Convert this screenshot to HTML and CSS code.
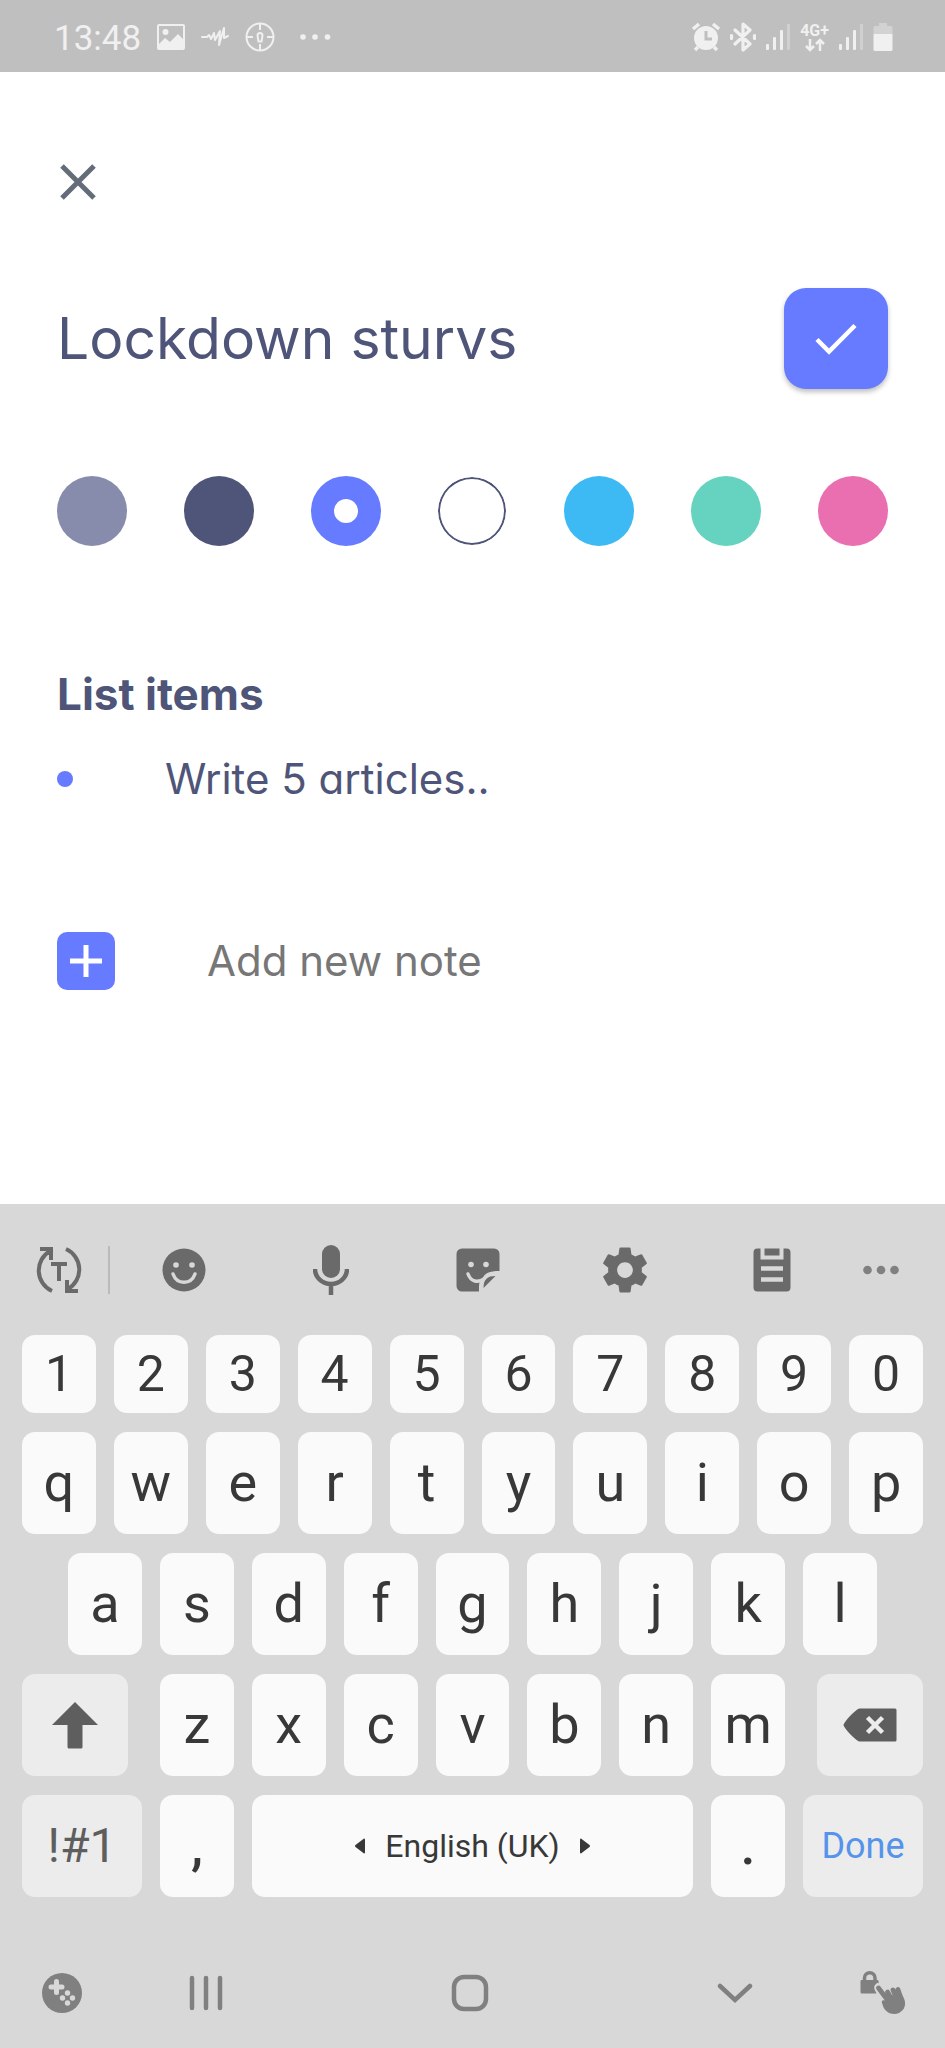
FILE: index.html
```html
<!DOCTYPE html>
<html lang="en">
<head>
<meta charset="utf-8">
<meta name="viewport" content="width=device-width, initial-scale=1">
<title>Lockdown sturvs</title>
<link rel="stylesheet" href="styles.css">
</head>
<body>
<div class="screen">
  <header class="status">
    <div class="status-left">
      <time class="clock">13:48</time>
      <svg width="28" height="28" viewBox="0 0 28 28" fill="currentColor" aria-hidden="true"><path fill-rule="evenodd" d="M2 1h24a2 2 0 0 1 2 2v22a2 2 0 0 1-2 2H2a2 2 0 0 1-2-2V3a2 2 0 0 1 2-2zm0 2v18l6-6 5 4 8-8 5 5V3zM8.500 6a3 3 0 1 1 0 6 3 3 0 0 1 0-6z"/></svg>
      <svg class="pulse" width="28" height="20" viewBox="0 0 28 20" fill="none" stroke="currentColor" stroke-width="2" stroke-linejoin="round" stroke-linecap="round" aria-hidden="true"><path d="M1 10h5l2-2 2 4 3-6 1 7 5-9-1 14 5-17v10l4-2"/></svg>
      <svg class="target" width="30" height="30" viewBox="0 0 30 30" fill="none" stroke="currentColor" stroke-width="2" aria-hidden="true"><circle cx="15" cy="15" r="13.500"/><path d="M15 2v6M15 22v6M2 15h6M22 15h6M13.500 19.500l-1-6a2.500 2.500 0 1 1 5 0l-1 6z" /></svg>
      <svg class="more" width="32" height="8" viewBox="0 0 32 8" fill="currentColor" aria-hidden="true"><circle cx="4" cy="4" r="2.800"/><circle cx="16" cy="4" r="2.800"/><circle cx="28.500" cy="4" r="2.800"/></svg>
    </div>
    <div class="status-right">
      <svg width="30" height="30" viewBox="0 0 30 30" aria-hidden="true"><circle cx="15" cy="16" r="12" fill="currentColor"/><path d="M2 7l6-5M28 7l-6-5M7 25l-3 3M23 25l3 3" stroke="currentColor" stroke-width="3.500"/><path d="M15 9v8h6" stroke="#bfbfbf" stroke-width="3" fill="none"/></svg>
      <svg width="26" height="30" viewBox="0 0 26 30" fill="none" stroke="currentColor" stroke-width="3.200" stroke-linejoin="round" stroke-linecap="round" aria-hidden="true"><path d="M5 8l15 14-7 6V2l7 6L5 22M1.500 13.500v3M24.500 13.500v3"/></svg>
      <svg width="26" height="28" viewBox="0 0 26 28" fill="currentColor" aria-hidden="true"><rect x="1" y="21" width="3" height="6" rx="1"/><rect x="8" y="14" width="3" height="13" rx="1"/><rect x="15" y="7" width="3" height="20" rx="1"/><rect x="22" y="1" width="3" height="26" rx="1" opacity=".35"/></svg>
      <span class="net"><span>4G+</span><svg width="20" height="14" viewBox="0 0 20 14" fill="none" stroke="currentColor" stroke-width="2.500" aria-hidden="true"><path d="M5 1v11M1 8l4 4 4-4M15 13V2M11 6l4-4 4 4"/></svg></span>
      <svg width="26" height="28" viewBox="0 0 26 28" fill="currentColor" aria-hidden="true"><rect x="1" y="21" width="3" height="6" rx="1"/><rect x="8" y="14" width="3" height="13" rx="1"/><rect x="15" y="7" width="3" height="20" rx="1"/><rect x="22" y="1" width="3" height="26" rx="1" opacity=".35"/></svg>
      <svg width="20" height="28" viewBox="0 0 20 28" fill="currentColor" aria-hidden="true"><path d="M6 0h8v3h4a1.500 1.500 0 0 1 1.500 1.500V11H.5V4.500A1.500 1.500 0 0 1 2 3h4z" opacity=".4"/><path d="M.5 11h19v15.500A1.500 1.500 0 0 1 18 28H2a1.500 1.500 0 0 1-1.500-1.500z"/></svg>
    </div>
  </header>

  <main class="note">
    <button class="close" type="button" aria-label="Close"><svg width="36" height="36" viewBox="0 0 36 36" fill="none" stroke="currentColor" stroke-width="5" aria-hidden="true"><path d="M2 2l32 32M34 2L2 34"/></svg></button>
    <div class="title-row">
      <input class="title" type="text" value="Lockdown sturvs" aria-label="Title">
      <button class="save" type="button" aria-label="Save"><svg width="42" height="34" viewBox="0 0 42 34" fill="none" stroke="currentColor" stroke-width="4.500" aria-hidden="true"><path d="M2 17.500l12 12L40 3.500"/></svg></button>
    </div>
    <div class="swatches" role="radiogroup" aria-label="Colour">
      <input class="swatch grey" type="radio" name="colour" aria-label="Grey">
      <input class="swatch navy" type="radio" name="colour" aria-label="Navy">
      <input class="swatch indigo" type="radio" name="colour" aria-label="Indigo" checked>
      <input class="swatch white" type="radio" name="colour" aria-label="White">
      <input class="swatch sky" type="radio" name="colour" aria-label="Sky">
      <input class="swatch mint" type="radio" name="colour" aria-label="Mint">
      <input class="swatch pink" type="radio" name="colour" aria-label="Pink">
    </div>
    <h2 class="heading">List items</h2>
    <ul class="items"><li>Write 5 articles..</li></ul>
    <div class="add-row">
      <button class="add" type="button" aria-label="Add"><svg width="34" height="34" viewBox="0 0 34 34" fill="none" stroke="currentColor" stroke-width="5" aria-hidden="true"><path d="M17 1v32M1 17h32"/></svg></button>
      <input class="new-note" type="text" placeholder="Add new note" aria-label="Add new note">
    </div>
  </main>

  <section class="keyboard" aria-label="Keyboard">
    <div class="tools">
      <button class="tool first" type="button" aria-label="Text mode"><svg width="48" height="48" viewBox="0 0 48 48" fill="none" stroke="currentColor" stroke-width="4" aria-hidden="true"><path d="M17 45A22.500 22.500 0 0 1 15 5M31 3A22.500 22.500 0 0 1 33 43M5 3h11v11M43 45H32V34M16 18h16M24 18v17"/></svg></button>
      <button class="tool" type="button" aria-label="Emoji"><svg width="44" height="44" viewBox="0 0 44 44" aria-hidden="true"><circle cx="22" cy="22" r="21.500" fill="currentColor"/><circle cx="14" cy="17" r="2.800" fill="#d8d8d8"/><circle cx="30" cy="17" r="2.800" fill="#d8d8d8"/><path d="M11 26c4 11 18 11 22 0" fill="none" stroke="#d8d8d8" stroke-width="3.500" stroke-linecap="round"/></svg></button>
      <button class="tool" type="button" aria-label="Voice"><svg width="36" height="50" viewBox="0 0 36 50" aria-hidden="true"><rect x="9" y="0" width="18" height="33" rx="9" fill="currentColor"/><path d="M2 24a16 15 0 0 0 32 0M18 39v11" fill="none" stroke="currentColor" stroke-width="4.500"/></svg></button>
      <button class="tool" type="button" aria-label="Stickers"><svg width="44" height="44" viewBox="0 0 44 44" aria-hidden="true"><path d="M6 .5h32a5.500 5.500 0 0 1 5.500 5.500v17C33 23 29 25 26 31c-3 2-3 5-3 12.500H6A5.500 5.500 0 0 1 .5 38V6A5.500 5.500 0 0 1 6 .5z" fill="currentColor"/><path d="M27.500 40c0-9 4-12 12-12z" fill="currentColor"/><circle cx="15" cy="16.500" r="2.800" fill="#d8d8d8"/><circle cx="30" cy="16.500" r="2.800" fill="#d8d8d8"/><path d="M12 26c3 8 10 9 16 5" fill="none" stroke="#d8d8d8" stroke-width="3.500" stroke-linecap="round"/></svg></button>
      <button class="tool" type="button" aria-label="Settings"><svg width="54" height="54" viewBox="0 0 24 24" fill="currentColor" aria-hidden="true"><path d="M19.430 12.980c.040-.320.070-.640.070-.980s-.030-.660-.070-.980l2.110-1.650c.190-.150.240-.420.120-.640l-2-3.460c-.120-.220-.390-.300-.610-.220l-2.490 1c-.520-.400-1.080-.730-1.690-.980l-.380-2.650C14.460 2.180 14.250 2 14 2h-4c-.250 0-.460.180-.490.420l-.380 2.650c-.610.250-1.170.590-1.690.980l-2.490-1c-.230-.090-.490 0-.610.220l-2 3.460c-.130.220-.070.490.120.640l2.110 1.650c-.040.320-.070.650-.070.980s.030.660.070.980l-2.110 1.650c-.190.150-.240.420-.120.640l2 3.460c.120.220.390.300.610.220l2.490-1c.520.400 1.080.730 1.690.980l.380 2.650c.030.240.240.420.490.420h4c.250 0 .460-.180.490-.420l.380-2.650c.610-.250 1.170-.590 1.690-.980l2.490 1c.230.090.490 0 .610-.220l2-3.460c.120-.220.070-.490-.120-.640l-2.110-1.650zM12 15.500c-1.930 0-3.500-1.570-3.500-3.500s1.570-3.500 3.500-3.500 3.500 1.570 3.500 3.500-1.570 3.500-3.500 3.500z"/></svg></button>
      <button class="tool" type="button" aria-label="Clipboard"><svg width="38" height="44" viewBox="0 0 38 44" aria-hidden="true"><rect x=".5" y=".5" width="37" height="43" rx="4" fill="currentColor"/><path d="M9.500 0v9.500h19V0" fill="none" stroke="#d8d8d8" stroke-width="4"/><path d="M8 20.500h22M8 31.500h22" stroke="#d8d8d8" stroke-width="4.500"/></svg></button>
      <button class="tool" type="button" aria-label="More"><svg width="36" height="10" viewBox="0 0 36 10" fill="#808080" aria-hidden="true"><circle cx="4.500" cy="5" r="4.300"/><circle cx="18" cy="5" r="4.300"/><circle cx="31.500" cy="5" r="4.300"/></svg></button>
    </div>
    <div class="keys">
      <div class="row digits"><button class="key">1</button><button class="key">2</button><button class="key">3</button><button class="key">4</button><button class="key">5</button><button class="key">6</button><button class="key">7</button><button class="key">8</button><button class="key">9</button><button class="key">0</button></div>
      <div class="row"><button class="key">q</button><button class="key">w</button><button class="key">e</button><button class="key">r</button><button class="key">t</button><button class="key">y</button><button class="key">u</button><button class="key">i</button><button class="key">o</button><button class="key">p</button></div>
      <div class="row inset"><button class="key">a</button><button class="key">s</button><button class="key">d</button><button class="key">f</button><button class="key">g</button><button class="key">h</button><button class="key">j</button><button class="key">k</button><button class="key">l</button></div>
      <div class="row shift-row">
        <button class="key alt" aria-label="Shift"><svg width="46" height="48" viewBox="0 0 46 48" fill="currentColor" aria-hidden="true"><path d="M23 1l23 23H30.500v22a1.500 1.500 0 0 1-1.500 1.500H17a1.500 1.500 0 0 1-1.500-1.500V24H0z"/></svg></button>
        <div class="row letters"><button class="key">z</button><button class="key">x</button><button class="key">c</button><button class="key">v</button><button class="key">b</button><button class="key">n</button><button class="key">m</button></div>
        <button class="key alt" aria-label="Backspace"><svg width="54" height="34" viewBox="0 0 54 34" aria-hidden="true"><path d="M16 .5h36A1.500 1.500 0 0 1 53.500 2v30a1.500 1.500 0 0 1-1.500 1.500H16C11 31 1 20 .5 17 1 14 11 3 16 .5z" fill="currentColor"/><path d="M24.500 9.500l15 15M39.500 9.500l-15 15" stroke="#ececec" stroke-width="4.500"/></svg></button>
      </div>
      <div class="row bottom-row"><button class="key alt symbols">!#1</button><button class="key mark">,</button><button class="key space"><svg width="10" height="16" viewBox="0 0 10 16" fill="currentColor" aria-hidden="true"><path d="M9 .5q1 0 1 1v13q0 1-1 1L.5 9q-1-1 0-2z"/></svg><span>English (UK)</span><svg width="10" height="16" viewBox="0 0 10 16" fill="currentColor" aria-hidden="true"><path d="M1 .5q-1 0-1 1v13q0 1 1 1L9.500 9q1-1 0-2z"/></svg></button><button class="key mark">.</button><button class="key alt done">Done</button></div>
    </div>
    <nav class="nav" aria-label="System">
      <button type="button" aria-label="Game tools"><svg width="42" height="42" viewBox="0 0 42 42" aria-hidden="true"><circle cx="21" cy="21" r="20" fill="currentColor"/><path d="M15.500 9.500v11M10 15h11" stroke="#d8d8d8" stroke-width="5" stroke-linecap="round"/><g fill="#d8d8d8"><circle cx="26.500" cy="21" r="2.700"/><circle cx="21.500" cy="26" r="2.700"/><circle cx="31.500" cy="26" r="2.700"/><circle cx="26.500" cy="31" r="2.700"/></g></svg></button>
      <button type="button" aria-label="Recent apps"><svg width="34" height="36" viewBox="0 0 34 36" stroke="currentColor" stroke-width="4.500" stroke-linecap="round" aria-hidden="true"><path d="M3 3v30M17 3v30M31 3v30"/></svg></button>
      <button type="button" aria-label="Home"><svg width="38" height="38" viewBox="0 0 38 38" fill="none" stroke="currentColor" stroke-width="4.500" aria-hidden="true"><rect x="3" y="3" width="32" height="32" rx="10"/></svg></button>
      <button type="button" aria-label="Hide keyboard"><svg width="36" height="22" viewBox="0 0 36 22" fill="none" stroke="currentColor" stroke-width="4.500" stroke-linecap="round" aria-hidden="true"><path d="M3 4l15 14L33 4"/></svg></button>
      <button type="button" aria-label="Touch lock"><svg width="48" height="46" viewBox="0 0 48 46" aria-hidden="true"><path d="M6.500 11V8a5 5 0 0 1 10.500 0v3" fill="none" stroke="currentColor" stroke-width="3.500"/><path d="M3 10h17l1 2.500c-4 1-6 4-4 8l1.500 3H4a1.500 1.500 0 0 1-1.500-1.500V11z" fill="currentColor"/><path d="M20.500 18L31 32M29.500 22l4 7M35 20l3 7M40 19.500l2 6" fill="none" stroke="currentColor" stroke-width="4.800" stroke-linecap="round"/><path d="M28 28l14-6c7 8 7 17-1 21-7 3-14-1-16-7l-1-3c-1-3 2-4 5-1z" fill="currentColor"/></svg></button>
    </nav>
  </section>
</div>
</body>
</html>
```
FILE: styles.css
```css
* { box-sizing: border-box; }

body {
  margin: 0;
  background: #fff;
  font-family: Roboto, "Liberation Sans", sans-serif;
}

button, input {
  margin: 0;
  padding: 0;
  border: 0;
  background: none;
  color: inherit;
  font: inherit;
}

svg { display: block; flex: none; }

.screen {
  display: flex;
  flex-direction: column;
  min-height: 100vh;
}

.status {
  display: flex;
  align-items: center;
  justify-content: space-between;
  height: 72px;
  padding: 2px 52px 0 54px;
  background: #bfbfbf;
  color: #f0f0f0;
}

.status-left, .status-right { display: flex; align-items: center; }
.status-left { gap: 16px; }
.status-right { gap: 9px; }
.clock { font-size: 35px; line-height: 40px; padding-top: 4px; }
.target { margin-right: 8px; }

.net {
  display: flex;
  flex-direction: column;
  align-items: center;
  font-size: 16px;
  line-height: 15px;
  font-weight: 700;
}

.note {
  flex: 1;
  padding: 92px 57px 0;
  color: #4e5578;
  font-family: Inter, "Open Sans", sans-serif;
  font-feature-settings: "cv11";
}

.close { display: block; padding: 0 3px; color: #636c78; }

.title-row {
  display: flex;
  align-items: center;
  gap: 24px;
  margin-top: 88px;
}

.title { flex: 1; min-width: 0; font-size: 57px; line-height: 72px; }

.save {
  display: grid;
  place-items: center;
  width: 104px;
  height: 101px;
  border-radius: 22px;
  background: #667bff;
  color: #fff;
  box-shadow: 0 3px 5px rgba(0, 0, 0, .25);
}

.swatches {
  display: flex;
  justify-content: space-between;
  margin-top: 87px;
}

.swatch {
  appearance: none;
  width: 70px;
  height: 70px;
  border-radius: 50%;
}

.grey { background: #888cac; }
.navy { background: #4e5578; }
.indigo { background: #667bff; }
.white { border: 1px solid #fff; box-shadow: inset 0 0 0 2px #4e5578; }
.sky { background: #3db9f3; }
.mint { background: #65d3c0; }
.pink { background: #ea6fb0; }
.swatch:checked { border: 23px solid #667bff; background: #fff; }

.heading {
  margin: 120px 0 0;
  font-size: 44px;
  line-height: 56px;
  font-weight: 700;
}

.items {
  margin: 29px 0 0;
  padding: 0;
  list-style: none;
  font-size: 42px;
  line-height: 56px;
}

.items li { display: flex; align-items: center; gap: 92px; }

.items li::before {
  content: "";
  width: 16px;
  height: 16px;
  border-radius: 50%;
  background: #667bff;
}

.add-row { display: flex; align-items: center; gap: 92px; margin-top: 125px; }

.add {
  display: grid;
  place-items: center;
  width: 58px;
  height: 58px;
  border-radius: 10px;
  background: #667bff;
  color: #fff;
}

.new-note { flex: 1; min-width: 0; font-size: 42px; line-height: 56px; }
.new-note::placeholder { color: #777; opacity: 1; }

.keyboard { background: #d8d8d8; color: #383838; }

.tools {
  display: grid;
  grid-template-columns: 110fr repeat(5, 147fr) 72fr;
  align-items: center;
  height: 131px;
  padding-right: 28px;
  color: #6a6a6a;
}

.tool { display: grid; place-items: center; height: 54px; }
.tool.first { height: 48px; padding-left: 10px; border-right: 2px solid #bababa; }

.keys { display: grid; gap: 19px; padding: 0 22px; }
.row { display: grid; grid-auto-flow: column; grid-auto-columns: 1fr; gap: 18px; }
.inset { padding: 0 46px; }
.shift-row { grid-template-columns: 106fr 626fr 106fr; gap: 32px; }
.letters { gap: 18px; }
.bottom-row { grid-template-columns: 120fr 74fr 441fr 74fr 120fr; }

.key {
  display: flex;
  align-items: center;
  justify-content: center;
  min-width: 0;
  height: 102px;
  border-radius: 13px;
  background: #fafafa;
  font-size: 54px;
  line-height: 64px;
}

.digits .key { height: 78px; font-size: 50px; }
.key.alt { background: #ececec; color: #5e5e5e; }
.key.symbols { font-size: 48px; }
.key.mark { font-weight: 500; }
.key.space { gap: 20px; font-size: 32px; }
.key.done { color: #5594ea; font-size: 36px; }

.nav {
  display: grid;
  grid-template-columns: 123fr 165fr 364fr 166fr 127fr;
  align-items: center;
  height: 151px;
  padding-top: 40px;
  color: #808080;
}

.nav button { display: grid; place-items: center; height: 109px; }
```
